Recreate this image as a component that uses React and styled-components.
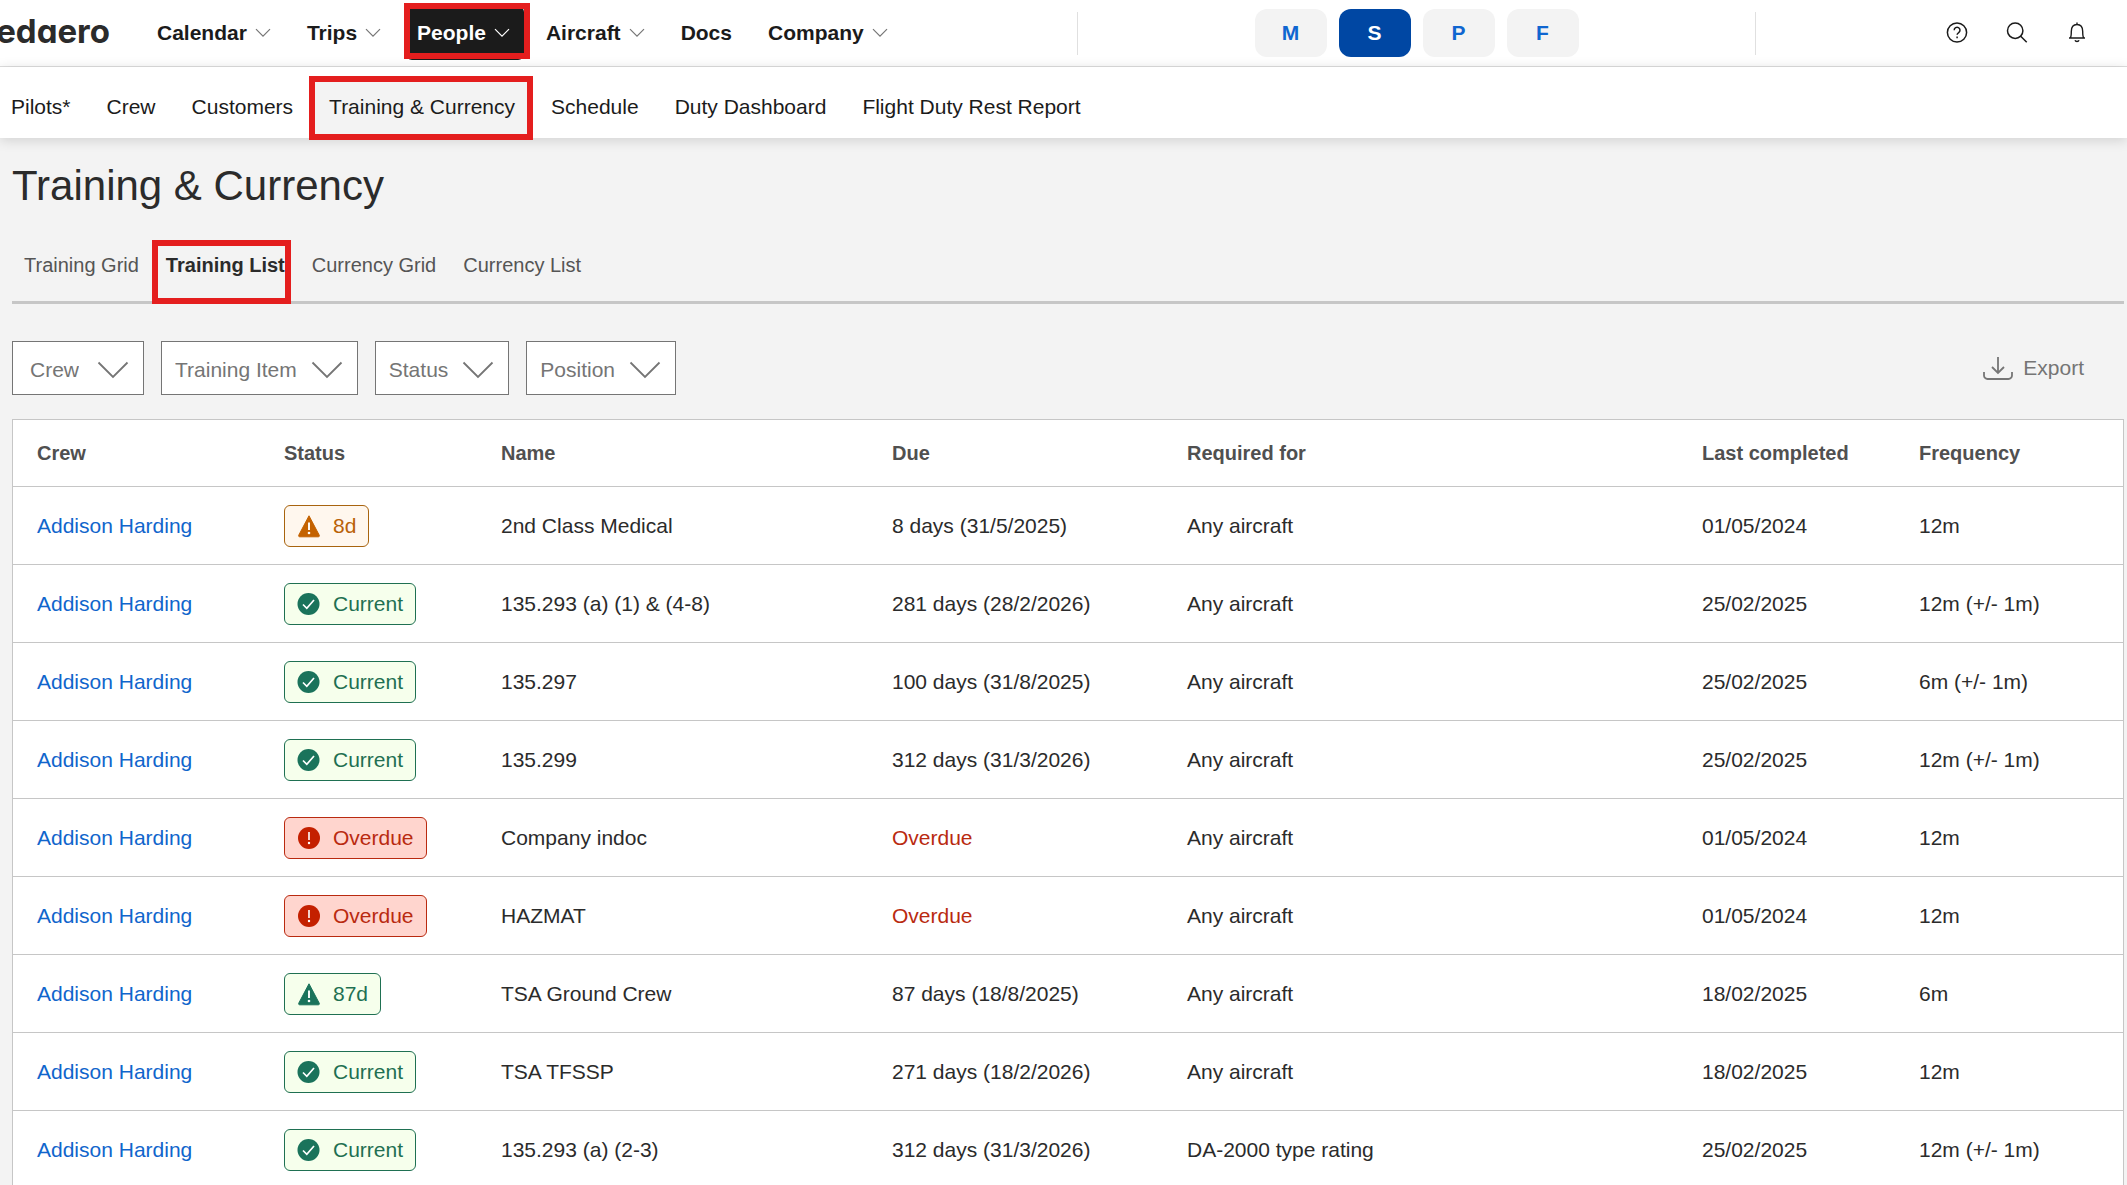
import styled, { createGlobalStyle, css } from 'styled-components'


const GlobalStyle = createGlobalStyle`
    *, *::before, *::after {
        box-sizing: border-box;
    }

    body {
        margin: 0;
        background-color: #f3f3f3;
        color: #1b1b1b;
        font-family: "Liberation Sans", Arial, sans-serif;
        font-size: 21px;
        line-height: 24px;
    }

    a {
        color: inherit;
        text-decoration: none;
    }

    button, select {
        font: inherit;
        color: inherit;
        cursor: pointer;
    }
`

const Shell = styled.div`
    display: flex;
    flex-direction: column;
    height: 100vh;
`

/* red frame that highlights a step of the walkthrough */
const highlight = css`
    position: relative;

    &::after {
        content: "";
        position: absolute;
        inset: ${props => props.$frame};
        border: 6px solid #e41e1e;
        pointer-events: none;
    }
`

const TopBar = styled.header`
    display: flex;
    align-items: center;
    flex-shrink: 0;
    height: 67px;
    background-color: #fff;
    border-bottom: 1px solid #dfdfdf;
`

const Logo = styled.a`
    display: flex;
    justify-content: flex-end;
    width: 110px;
    margin-right: 47px;
    color: #2b2b2b;
    font-family: Inter, sans-serif;
    font-size: 33px;
    font-weight: 700;
    line-height: 44px;
    padding-bottom: 4px;
    font-feature-settings: "cv11";
`

const MainNav = styled.nav`
    display: flex;
    align-items: center;
    gap: 36px;
`

const MenuButton = styled.button`
    display: flex;
    align-items: center;
    gap: 8px;
    height: 54px;
    padding: 0;
    border: 0;
    background: none;
    font-weight: 700;

    svg {
        color: #767676;
    }

    ${props => props.$active && css`
        ${highlight}
        margin: 0 -14px 0 -11px;
        padding: 0 14px 0 11px;
        border-radius: 6px;
        background-color: #1b1b1b;
        color: #fff;

        svg {
            color: #fff;
        }
    `}
`

const MenuLink = styled.a`
    font-weight: 700;
`

const Switcher = styled.div`
    display: flex;
    align-items: center;
    justify-content: center;
    gap: 12px;
    width: 679px;
    height: 43px;
    margin-left: auto;
    border: solid #e0e0e0;
    border-width: 0 1px;
`

const SwitchButton = styled.button`
    width: 72px;
    height: 48px;
    padding: 0;
    border: 0;
    border-radius: 12px;
    background-color: ${props => (props.$active ? '#0047a3' : '#f3f3f3')};
    color: ${props => (props.$active ? '#fff' : '#0f66d0')};
    font-weight: 700;
`

const Tools = styled.div`
    display: flex;
    justify-content: flex-end;
    gap: 36px;
    width: 371px;
    padding-right: 38px;
`

const IconButton = styled.button`
    display: flex;
    padding: 0;
    border: 0;
    background: none;
`

const SubNav = styled.nav`
    position: relative;
    z-index: 1;
    display: flex;
    align-items: center;
    flex-shrink: 0;
    gap: 36px;
    height: 71px;
    padding: 11px 11px 2px;
    background-color: #fff;
    box-shadow: 0 2px 12px rgba(0, 0, 0, .15);
`

const SubLink = styled.a`
    line-height: 58px;

    ${props => props.$active && css`
        ${highlight}
        margin: 0 -14px;
        padding: 0 14px;
        background-color: #f3f3f3;
    `}
`

const Content = styled.main`
    flex: 1;
    min-height: 0;
    padding: 24px 3px 0 12px;
    overflow: auto;
    scrollbar-width: none;
`

const PageTitle = styled.h1`
    margin: 0;
    color: #2b2b2b;
    font-size: 42px;
    font-weight: 400;
    line-height: 48px;
`

const Tabs = styled.div`
    display: flex;
    gap: 27px;
    height: 94px;
    padding: 43px 12px 0;
    border-bottom: 3px solid #c6c6c6;
`

const Tab = styled.button`
    height: 24px;
    padding: 0;
    border: 0;
    background: none;
    color: #555;
    font-size: 20px;

    ${props => props.$active && css`
        ${highlight}
        color: #2b2b2b;
        font-weight: 700;
    `}
`

const FilterBar = styled.div`
    display: flex;
    align-items: center;
    gap: 17px;
    padding: 37px 0 24px;
`

const FilterBox = styled.div`
    position: relative;
    color: #757575;

    svg {
        position: absolute;
        top: 20px;
        right: 15px;
        pointer-events: none;
    }
`

const FilterSelect = styled.select`
    display: block;
    field-sizing: content;
    height: 54px;
    padding: ${props => (props.$roomy ? '3px 64px 0 17px' : '3px 60px 0 13px')};
    border: 1px solid #757575;
    border-radius: 0;
    background-color: #fff;
    appearance: none;
`

const ExportButton = styled.button`
    display: flex;
    align-items: center;
    gap: 9px;
    margin-left: auto;
    padding: 0 40px 0 0;
    border: 0;
    background: none;
    color: #757575;
`

const Table = styled.table`
    width: 100%;
    table-layout: fixed;
    border: 1px solid #c6c6c6;
    border-spacing: 0;
    background-color: #fff;
    color: #2b2b2b;
`

const HeadCell = styled.th`
    width: ${props => props.$width || 'auto'};
    height: 66px;
    padding: 0 0 0 24px;
    color: #505050;
    font-size: 20px;
    font-weight: 700;
    text-align: left;
`

const Cell = styled.td`
    height: 78px;
    padding: 0 0 0 24px;
    border-top: 1px solid #c6c6c6;
    color: ${props => (props.$overdue ? '#b92a10' : 'inherit')};
`

const CrewLink = styled.a`
    color: #1065cc;
`

const tones = {
    amber: { text: '#b96208', icon: '#c46200', border: '#a8640f', background: '#fff7ee' },
    green: { text: '#1f7052', icon: '#1a735b', border: '#1f7052', background: '#f6ffec' },
    red: { text: '#b92a10', icon: '#c42000', border: '#b92a10', background: '#ffd5ce' },
}

const Badge = styled.span`
    display: inline-flex;
    align-items: center;
    gap: 12px;
    height: 42px;
    padding: 0 12px;
    border: 1px solid ${props => tones[props.$tone].border};
    border-radius: 6px;
    background-color: ${props => tones[props.$tone].background};
    color: ${props => tones[props.$tone].text};
    vertical-align: middle;

    svg {
        color: ${props => tones[props.$tone].icon};
    }
`


function SmallChevron() {
    return (
        <svg width="16" height="10" viewBox="0 0 16 10" fill="none" stroke="currentColor" strokeWidth="1.2">
            <path d="M1 1.2 8 8.2l7-7" />
        </svg>
    )
}

function LargeChevron() {
    return (
        <svg width="32" height="18" viewBox="0 0 32 18" fill="none" stroke="currentColor" strokeWidth="1.8">
            <path d="M1.5 1.5 16 16 30.5 1.5" />
        </svg>
    )
}

function HelpIcon() {
    return (
        <svg width="24" height="24" viewBox="0 0 24 24" fill="none" stroke="currentColor" strokeWidth="1.5">
            <circle cx="12" cy="11.5" r="9.6" />
            <path d="M9.2 9.2a2.9 2.9 0 1 1 4.5 2.4c-1 .7-1.6 1.200-1.6 2.2" />
            <path d="M12.1 15.500v1.8" />
        </svg>
    )
}

function SearchIcon() {
    return (
        <svg width="24" height="24" viewBox="0 0 24 24" fill="none" stroke="currentColor" strokeWidth="1.5">
            <circle cx="10.200" cy="9.700" r="7.700" />
            <path d="m15.700 15.200 6 6" />
        </svg>
    )
}

function BellIcon() {
    return (
        <svg width="24" height="24" viewBox="0 0 24 24" fill="none" stroke="currentColor" strokeWidth="1.4">
            <path d="M12 1.500v2M4 17h16M5.300 17c.9-1.400 1-3 1-6.500 0-4.200 2.200-7 5.700-7s5.700 2.800 5.700 7c0 3.500.1 5.100 1 6.500" />
            <path d="M10 19.300c.5 1.500 3.500 1.500 4 0" />
        </svg>
    )
}

function ExportIcon() {
    return (
        <svg width="32" height="26" viewBox="0 0 32 26" fill="none" stroke="currentColor" strokeWidth="1.800">
            <path d="M16 2v16M10 12l6 6 6-6" />
            <path d="M2 17v3.500a3.500 3.500 0 0 0 3.500 3.500h21a3.500 3.500 0 0 0 3.500-3.500V17" />
        </svg>
    )
}

function WarningIcon() {
    return (
        <svg width="24" height="24" viewBox="0 0 24 24">
            <path d="M12 1.800 1.700 21.300a1 1 0 0 0 .9 1.500h18.800a1 1 0 0 0 .9-1.500Z" fill="currentColor" stroke="currentColor" strokeLinejoin="round" />
            <path d="M12 8.500v7.500" stroke="#fff" strokeWidth="1.900" />
            <circle cx="12" cy="19" r="1.300" fill="#fff" />
        </svg>
    )
}

function CheckIcon() {
    return (
        <svg width="24" height="24" viewBox="0 0 24 24">
            <circle cx="11.500" cy="12" r="11" fill="currentColor" />
            <path d="m6 12.500 3.800 3.800L17 8" fill="none" stroke="#fff" strokeWidth="1.700" />
        </svg>
    )
}

function AlertIcon() {
    return (
        <svg width="24" height="24" viewBox="0 0 24 24">
            <circle cx="12" cy="12" r="11" fill="currentColor" />
            <path d="M12 6v8" stroke="#fff" strokeWidth="1.600" />
            <circle cx="12" cy="17" r="1.200" fill="#fff" />
        </svg>
    )
}


const badgeIcons = {
    warning: WarningIcon,
    check: CheckIcon,
    alert: AlertIcon,
}

const statuses = {
    due: { tone: 'amber', icon: 'warning' },
    soon: { tone: 'green', icon: 'warning' },
    current: { tone: 'green', icon: 'check' },
    overdue: { tone: 'red', icon: 'alert' },
}

const subPages = ['Pilots*', 'Crew', 'Customers', 'Training & Currency', 'Schedule', 'Duty Dashboard', 'Flight Duty Rest Report']

const tabs = ['Training Grid', 'Training List', 'Currency Grid', 'Currency List']

const filters = ['Crew', 'Training Item', 'Status', 'Position']

const columns = [
    { title: 'Crew', width: '247px' },
    { title: 'Status', width: '217px' },
    { title: 'Name', width: '391px' },
    { title: 'Due', width: '295px' },
    { title: 'Required for' },
    { title: 'Last completed', width: '217px' },
    { title: 'Frequency', width: '228px' },
]

const rows = [
    { status: 'due', label: '8d', name: '2nd Class Medical', due: '8 days (31/5/2025)', required: 'Any aircraft', completed: '01/05/2024', frequency: '12m' },
    { status: 'current', label: 'Current', name: '135.293 (a) (1) & (4-8)', due: '281 days (28/2/2026)', required: 'Any aircraft', completed: '25/02/2025', frequency: '12m (+/- 1m)' },
    { status: 'current', label: 'Current', name: '135.297', due: '100 days (31/8/2025)', required: 'Any aircraft', completed: '25/02/2025', frequency: '6m (+/- 1m)' },
    { status: 'current', label: 'Current', name: '135.299', due: '312 days (31/3/2026)', required: 'Any aircraft', completed: '25/02/2025', frequency: '12m (+/- 1m)' },
    { status: 'overdue', label: 'Overdue', name: 'Company indoc', due: 'Overdue', required: 'Any aircraft', completed: '01/05/2024', frequency: '12m' },
    { status: 'overdue', label: 'Overdue', name: 'HAZMAT', due: 'Overdue', required: 'Any aircraft', completed: '01/05/2024', frequency: '12m' },
    { status: 'soon', label: '87d', name: 'TSA Ground Crew', due: '87 days (18/8/2025)', required: 'Any aircraft', completed: '18/02/2025', frequency: '6m' },
    { status: 'current', label: 'Current', name: 'TSA TFSSP', due: '271 days (18/2/2026)', required: 'Any aircraft', completed: '18/02/2025', frequency: '12m' },
    { status: 'current', label: 'Current', name: '135.293 (a) (2-3)', due: '312 days (31/3/2026)', required: 'DA-2000 type rating', completed: '25/02/2025', frequency: '12m (+/- 1m)' },
]


function StatusBadge({ status, label }) {
    const { tone, icon } = statuses[status]
    const Icon = badgeIcons[icon]

    return (
        <Badge $tone={tone}>
            <Icon />
            {label}
        </Badge>
    )
}

function Header() {
    return (
        <TopBar>
            <Logo href="#">edaero</Logo>
            <MainNav aria-label="Main">
                <MenuButton>Calendar <SmallChevron /></MenuButton>
                <MenuButton>Trips <SmallChevron /></MenuButton>
                <MenuButton $active $frame="-3px -6px 1px -2px">People <SmallChevron /></MenuButton>
                <MenuButton>Aircraft <SmallChevron /></MenuButton>
                <MenuLink href="#">Docs</MenuLink>
                <MenuButton>Company <SmallChevron /></MenuButton>
            </MainNav>
            <Switcher>
                {['M', 'S', 'P', 'F'].map(letter => (
                    <SwitchButton key={letter} $active={letter === 'S'}>{letter}</SwitchButton>
                ))}
            </Switcher>
            <Tools>
                <IconButton aria-label="Help"><HelpIcon /></IconButton>
                <IconButton aria-label="Search"><SearchIcon /></IconButton>
                <IconButton aria-label="Notifications"><BellIcon /></IconButton>
            </Tools>
        </TopBar>
    )
}

function TrainingTable() {
    return (
        <Table>
            <thead>
                <tr>
                    {columns.map(column => (
                        <HeadCell key={column.title} $width={column.width}>{column.title}</HeadCell>
                    ))}
                </tr>
            </thead>
            <tbody>
                {rows.map(row => (
                    <tr key={row.name}>
                        <Cell><CrewLink href="#">Addison Harding</CrewLink></Cell>
                        <Cell><StatusBadge status={row.status} label={row.label} /></Cell>
                        <Cell>{row.name}</Cell>
                        <Cell $overdue={row.status === 'overdue'}>{row.due}</Cell>
                        <Cell>{row.required}</Cell>
                        <Cell>{row.completed}</Cell>
                        <Cell>{row.frequency}</Cell>
                    </tr>
                ))}
            </tbody>
        </Table>
    )
}

function App() {
    return (
        <Shell>
            <GlobalStyle />
            <Header />
            <SubNav aria-label="People">
                {subPages.map(page => (
                    <SubLink key={page} href="#" $active={page === 'Training & Currency'} $frame="-2px -4px -4px -6px">{page}</SubLink>
                ))}
            </SubNav>
            <Content>
                <PageTitle>Training & Currency</PageTitle>
                <Tabs role="tablist">
                    {tabs.map(tab => (
                        <Tab key={tab} role="tab" aria-selected={tab === 'Training List'} $active={tab === 'Training List'} $frame="-13px -6px -27px -14px">{tab}</Tab>
                    ))}
                </Tabs>
                <FilterBar>
                    {filters.map(filter => (
                        <FilterBox key={filter}>
                            <FilterSelect aria-label={filter} $roomy={filter === 'Crew'}>
                                <option>{filter}</option>
                            </FilterSelect>
                            <LargeChevron />
                        </FilterBox>
                    ))}
                    <ExportButton><ExportIcon /> Export</ExportButton>
                </FilterBar>
                <TrainingTable />
            </Content>
        </Shell>
    )
}

export default App
